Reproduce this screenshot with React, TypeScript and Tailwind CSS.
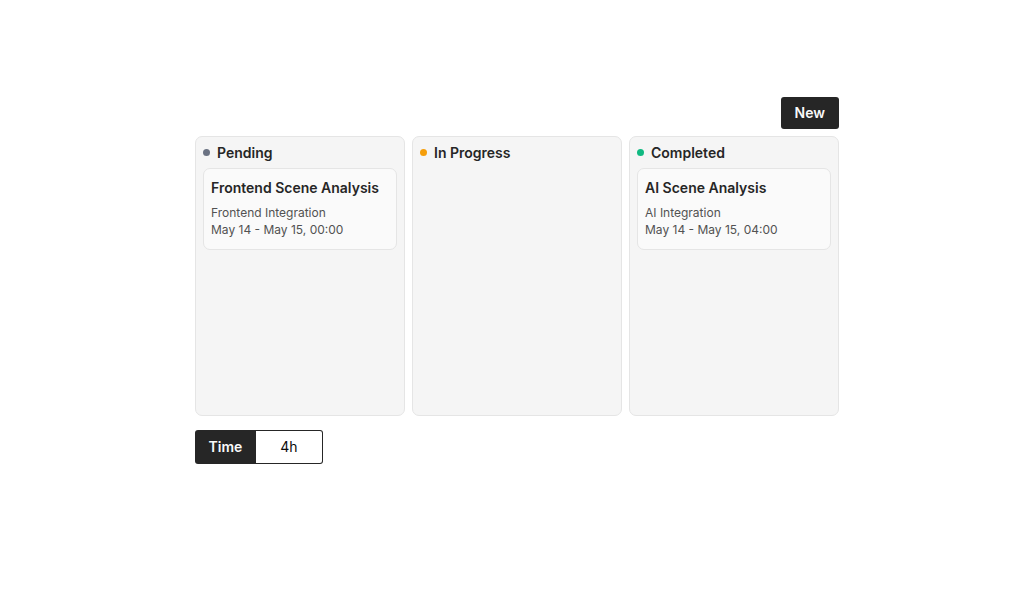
type Task = { title: string; description: string; dates: string };
type Column = { name: string; dot: string; tasks: Task[] };

const columns: Column[] = [
  {
    name: "Pending",
    dot: "bg-gray-500",
    tasks: [
      {
        title: "Frontend Scene Analysis",
        description: "Frontend Integration",
        dates: "May 14 - May 15, 00:00",
      },
    ],
  },
  { name: "In Progress", dot: "bg-[#f59e0b]", tasks: [] },
  {
    name: "Completed",
    dot: "bg-[#10b981]",
    tasks: [
      {
        title: "AI Scene Analysis",
        description: "AI Integration",
        dates: "May 14 - May 15, 04:00",
      },
    ],
  },
];

function TaskCard({ task }: { task: Task }) {
  return (
    <article className="rounded-[7px] border border-[#e5e5e5] bg-[#fafafa] px-[7px] pt-[9px] pb-[11px]">
      <h3 className="text-sm font-semibold text-[#262626]">{task.title}</h3>
      <p className="mt-[6px] text-[12px] leading-[17px] text-[#525252]">{task.description}</p>
      <p className="text-[12px] leading-[17px] text-[#525252]">{task.dates}</p>
    </article>
  );
}

export default function App() {
  return (
    <main className="min-h-screen bg-white pt-[97px] pb-8 pl-1 font-['Inter',sans-serif]">
      <div className="mx-auto flex w-full max-w-[644px] flex-col">
        <button
          type="button"
          className="h-8 self-end rounded-[3px] bg-[#262626] px-[14px] text-sm font-semibold text-[#fafafa]"
        >
          New
        </button>
        <div className="mt-[7px] grid grid-cols-3 gap-[7px]">
          {columns.map((column) => (
            <section
              key={column.name}
              className="min-h-[280px] rounded-[7px] border border-[#e5e5e5] bg-[#f5f5f5] px-[7px] pt-[6px]"
            >
              <h2 className="mb-[5px] flex items-center gap-[7px] text-sm font-semibold text-[#262626]">
                <span className={"mb-px size-[7px] rounded-full " + column.dot} />
                {column.name}
              </h2>
              {column.tasks.map((task) => (
                <TaskCard key={task.title} task={task} />
              ))}
            </section>
          ))}
        </div>
        <div className="mt-[14px] flex self-start">
          <button
            type="button"
            className="h-[34px] w-[61px] rounded-l-[3px] bg-[#262626] text-center text-sm font-semibold text-[#fafafa]"
          >
            Time
          </button>
          <input
            type="text"
            aria-label="Time"
            defaultValue="4h"
            className="h-[34px] w-[67px] rounded-r-[3px] border border-l-0 border-[#262626] bg-white pb-[2px] text-center text-sm text-[#0a0a0a]"
          />
        </div>
      </div>
    </main>
  );
}
